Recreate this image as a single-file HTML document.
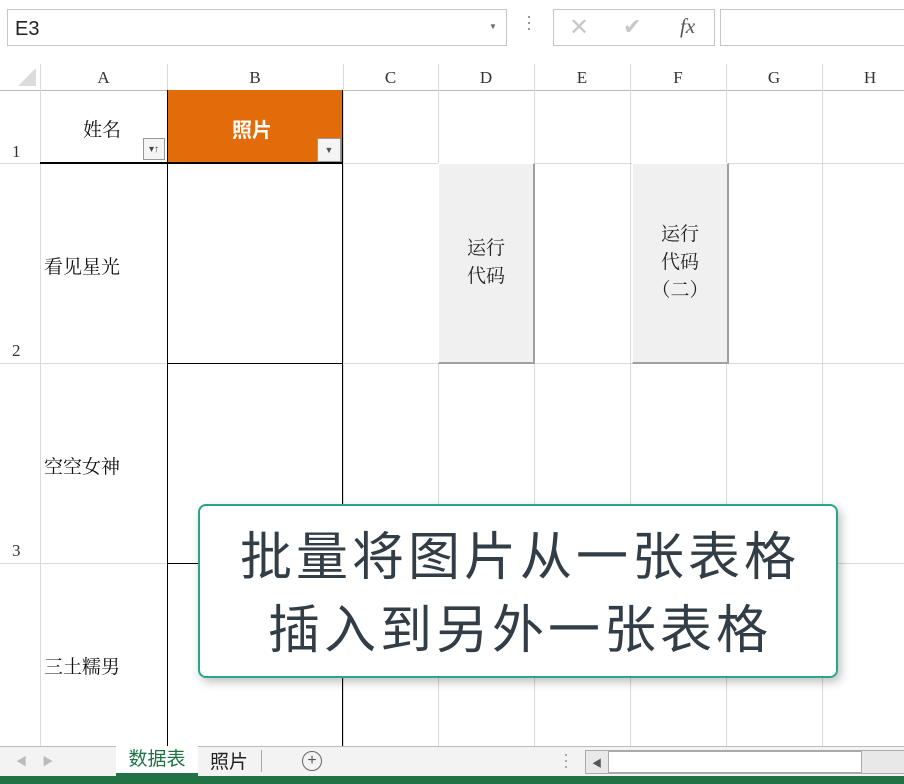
<!DOCTYPE html><html><head><meta charset="utf-8"><style>
body{margin:0;width:904px;height:784px;overflow:hidden;background:#fff;font-family:"Liberation Sans","Noto Sans CJK SC",sans-serif;position:relative}
.a{position:absolute}
.vl{position:absolute;width:1px;background:#dadada;top:64px;height:682px}
.hl{position:absolute;height:1px;background:#dadada;left:0;width:904px}
.ch{position:absolute;top:64px;height:26px;line-height:28px;text-align:center;font-family:"Liberation Serif",serif;font-size:17px;color:#333}
.rh{position:absolute;left:0;width:30px;font-family:"Liberation Serif",serif;font-size:17px;color:#333;padding-left:12px}
.cell{position:absolute;font-size:19px;color:#111;font-family:"Liberation Serif","Noto Serif CJK SC",serif}
.btn{position:absolute;background:#f0f0f0;border-right:2px solid #a0a0a0;border-bottom:2px solid #a0a0a0;border-top:1px solid #fff;border-left:1px solid #fff;box-sizing:border-box;display:flex;align-items:center;justify-content:center;text-align:center;font-size:19px;line-height:28px;color:#222;font-family:"Liberation Serif","Noto Serif CJK SC",serif}
</style></head><body>
<div class="a" style="left:0;top:0;width:904px;height:62px;background:#fff"></div>
<div class="a" style="left:7px;top:9px;width:500px;height:37px;border:1px solid #c6c6c6;font-size:20px;line-height:38px;padding-left:7px;box-sizing:border-box;color:#222">E3</div>
<div class="a" style="left:489px;top:22px;font-size:8px;color:#666">▼</div>
<div class="a" style="left:528px;top:16px;width:2px;height:2px;background:#999;box-shadow:0 6px #999,0 12px #999"></div>
<div class="a" style="left:553px;top:9px;width:162px;height:37px;border:1px solid #c6c6c6;box-sizing:border-box"></div>
<div class="a" style="left:569px;top:13px;font-size:24px;color:#c8c8c8">✕</div>
<div class="a" style="left:623px;top:14px;font-size:22px;color:#c8c8c8">✔</div>
<div class="a" style="left:680px;top:14px;font-size:21px;color:#555;font-family:'Liberation Serif',serif;font-style:italic">fx</div>
<div class="a" style="left:720px;top:9px;width:190px;height:37px;border:1px solid #c6c6c6;box-sizing:border-box"></div>
<div class="a" style="left:0;top:64px;width:904px;height:26px;background:#fff"></div>
<div class="a" style="left:18px;top:68px;width:0;height:0;border-left:18px solid transparent;border-bottom:18px solid #dcdcdc"></div>
<div class="hl" style="top:90px;background:#bbb"></div>
<div class="vl" style="left:40px"></div><div class="vl" style="left:167px"></div><div class="vl" style="left:343px"></div><div class="vl" style="left:438px"></div><div class="vl" style="left:534px"></div><div class="vl" style="left:630px"></div><div class="vl" style="left:726px"></div><div class="vl" style="left:822px"></div>
<div class="hl" style="top:163px"></div><div class="hl" style="top:363px"></div><div class="hl" style="top:563px"></div>
<div class="ch" style="left:40px;width:127px">A</div><div class="ch" style="left:167px;width:176px">B</div><div class="ch" style="left:343px;width:95px">C</div><div class="ch" style="left:438px;width:96px">D</div><div class="ch" style="left:534px;width:96px">E</div><div class="ch" style="left:630px;width:96px">F</div><div class="ch" style="left:726px;width:96px">G</div><div class="ch" style="left:822px;width:96px">H</div>
<div class="rh" style="top:142px">1</div><div class="rh" style="top:341px">2</div><div class="rh" style="top:541px">3</div>
<div class="a" style="left:167px;top:90px;width:176px;height:73px;background:#e26b0a"></div>
<div class="a" style="left:40px;top:162px;width:303px;height:2px;background:#000"></div>
<div class="a" style="left:167px;top:90px;width:1px;height:656px;background:#000"></div>
<div class="a" style="left:342px;top:90px;width:1px;height:656px;background:#000"></div>
<div class="a" style="left:167px;top:363px;width:176px;height:1px;background:#000"></div>
<div class="a" style="left:167px;top:563px;width:176px;height:1px;background:#000"></div>
<div class="cell" style="left:83px;top:115px">姓名</div>
<div class="a" style="left:232px;top:114px;color:#fff;font-weight:bold;font-size:20px">照片</div>
<div class="a" style="left:143px;top:138px;width:22px;height:22px;background:#f4f4f4;border:1px solid #999;box-sizing:border-box;font-size:10px;line-height:22px;color:#444;text-align:center">▾↑</div>
<div class="a" style="left:317px;top:138px;width:24px;height:24px;background:#f4f4f4;border:1px solid #999;box-sizing:border-box;font-size:9px;line-height:22px;color:#555;text-align:center">▼</div>
<div class="cell" style="left:44px;top:252px">看见星光</div>
<div class="cell" style="left:44px;top:452px">空空女神</div>
<div class="cell" style="left:44px;top:652px">三土糯男</div>
<div class="btn" style="left:438px;top:163px;width:97px;height:201px">运行<br>代码</div>
<div class="btn" style="left:632px;top:163px;width:97px;height:201px">运行<br>代码<br>（二）</div>
<div class="a" style="left:198px;top:504px;width:640px;height:174px;border:2px solid #2aa58a;border-radius:8px;box-sizing:border-box;background:#fff;box-shadow:3px 4px 10px rgba(0,0,0,.25);text-align:center;font-size:52px;line-height:73px;color:#333d45;padding-top:16px;padding-left:4px;letter-spacing:4px;font-weight:normal">批量将图片从一张表格<br>插入到另外一张表格</div>
<div class="a" style="left:0;top:746px;width:904px;height:30px;background:#f3f3f3;border-top:1px solid #bbb"></div>
<div class="a" style="left:16px;top:753px;font-size:11px;color:#bbb">◀&nbsp;&nbsp;&nbsp;&nbsp;&nbsp;▶</div>
<div class="a" style="left:116px;top:746px;width:82px;height:27px;background:#fff;border-bottom:3px solid #217346;color:#217346;font-size:19px;text-align:center;line-height:27px">数据表</div>
<div class="a" style="left:210px;top:747px;font-size:19px;color:#222">照片</div>
<div class="a" style="left:261px;top:750px;width:1px;height:22px;background:#aaa"></div>
<div class="a" style="left:302px;top:751px;width:18px;height:18px;border:1px solid #666;border-radius:50%;font-size:16px;line-height:18px;text-align:center;color:#555">+</div>
<div class="a" style="left:565px;top:754px;width:2px;height:2px;background:#aaa;box-shadow:0 6px #aaa,0 12px #aaa"></div>
<div class="a" style="left:585px;top:750px;width:320px;height:24px;border:1px solid #aaa;background:#e8e8e8;box-sizing:border-box"></div>
<div class="a" style="left:608px;top:751px;width:254px;height:22px;background:#fff;border:1px solid #aaa;box-sizing:border-box"></div>
<div class="a" style="left:592px;top:755px;font-size:10px;color:#555">◀</div>
<div class="a" style="left:0;top:776px;width:904px;height:8px;background:#217346"></div>
</body></html>
